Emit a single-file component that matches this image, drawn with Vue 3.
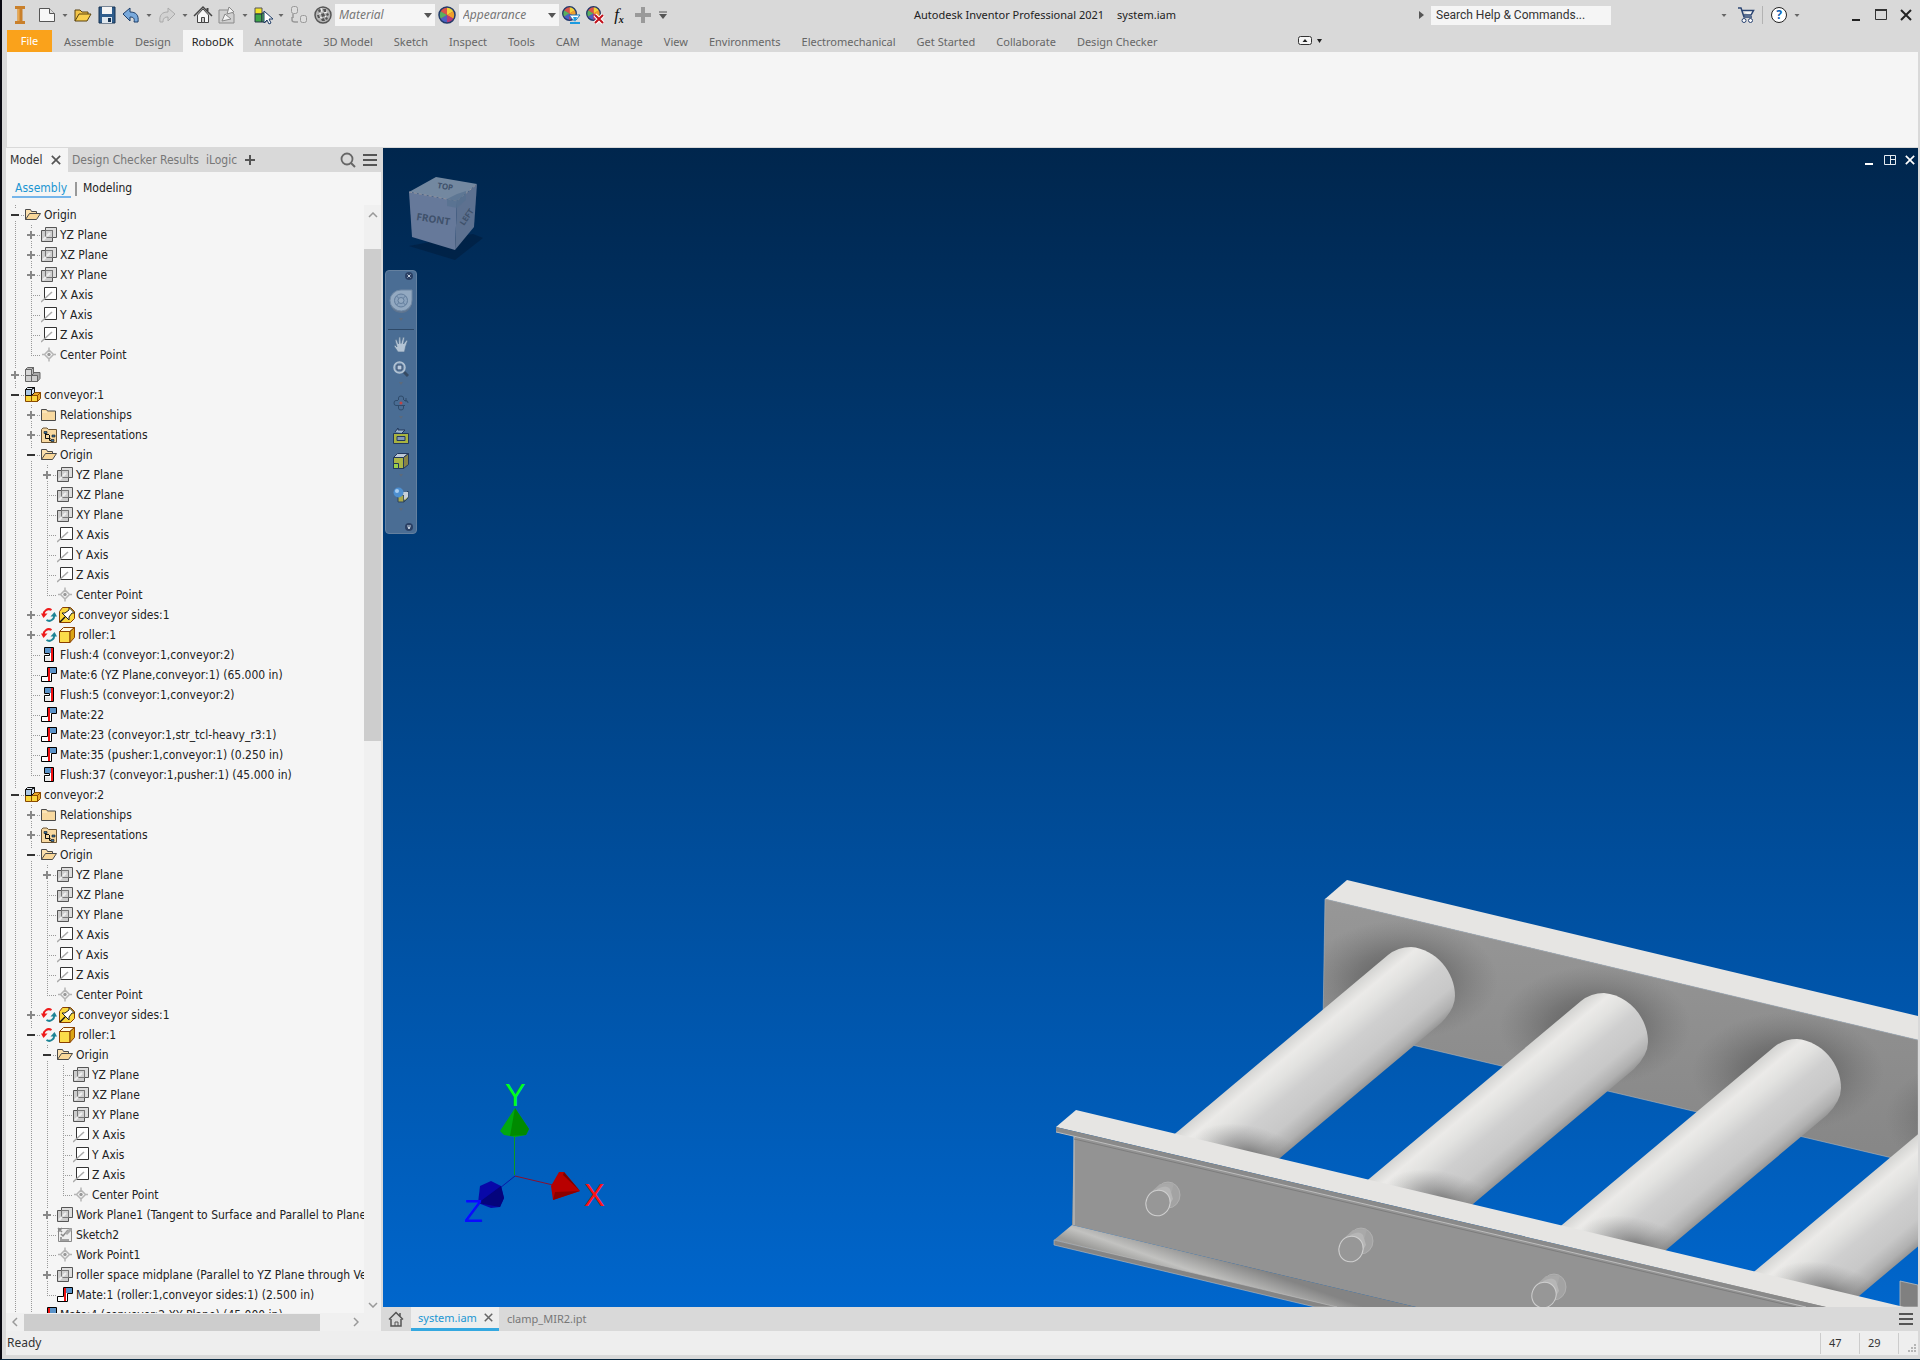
<script setup>
import { computed } from 'vue'

const quickTools = [
  { icon: 'logo', label: 'Inventor' },
  { icon: 'new', label: 'New', menu: true, gap: true },
  { icon: 'open', label: 'Open' },
  { icon: 'save', label: 'Save' },
  { icon: 'undo', label: 'Undo', menu: true },
  { icon: 'redo', label: 'Redo', menu: true },
  { icon: 'home', label: 'Home' },
  { icon: 'update', label: 'Update', menu: true },
  { icon: 'select', label: 'Select', menu: true },
  { icon: 'link', label: 'Link' },
  { icon: 'sphere', label: 'Material browser' },
]
const lookTools = [
  { icon: 'adjust', label: 'Adjust' },
  { icon: 'clear', label: 'Clear' },
  { icon: 'fx', label: 'Parameters' },
  { icon: 'add', label: 'Add' },
]
const ribbonTabs = [
  'Assemble', 'Design', 'RoboDK', 'Annotate', '3D Model', 'Sketch', 'Inspect', 'Tools', 'CAM',
  'Manage', 'View', 'Environments', 'Electromechanical', 'Get Started', 'Collaborate', 'Design Checker',
]
const activeTab = 'RoboDK'

const planes = (first) => [
  { t: 'YZ Plane', icon: 'plane', x: first },
  { t: 'XZ Plane', icon: 'plane', x: first },
  { t: 'XY Plane', icon: 'plane', x: first },
  { t: 'X Axis', icon: 'axis' },
  { t: 'Y Axis', icon: 'axis' },
  { t: 'Z Axis', icon: 'axis' },
  { t: 'Center Point', icon: 'point' },
]
const subPlanes = () => planes('').map((p, i) => (i ? p : { ...p, x: '+' }))
const common = () => [
  { t: 'Relationships', icon: 'folder', x: '+' },
  { t: 'Representations', icon: 'views', x: '+' },
  { t: 'Origin', icon: 'folder-open', x: '-', kids: subPlanes() },
  { t: 'conveyor sides:1', icon: 'pinned', x: '+', sync: true },
]
const tree = [
  { t: 'Origin', icon: 'folder-open', x: '-', kids: planes('+') },
  { t: '', icon: 'assembly-off', x: '+' },
  {
    t: 'conveyor:1', icon: 'assembly', x: '-',
    kids: [
      ...common(),
      { t: 'roller:1', icon: 'part', x: '+', sync: true },
      { t: 'Flush:4 (conveyor:1,conveyor:2)', icon: 'flush' },
      { t: 'Mate:6 (YZ Plane,conveyor:1) (65.000 in)', icon: 'mate' },
      { t: 'Flush:5 (conveyor:1,conveyor:2)', icon: 'flush' },
      { t: 'Mate:22', icon: 'mate' },
      { t: 'Mate:23 (conveyor:1,str_tcl-heavy_r3:1)', icon: 'mate' },
      { t: 'Mate:35 (pusher:1,conveyor:1) (0.250 in)', icon: 'mate' },
      { t: 'Flush:37 (conveyor:1,pusher:1) (45.000 in)', icon: 'flush' },
    ],
  },
  {
    t: 'conveyor:2', icon: 'assembly', x: '-', more: true,
    kids: [
      ...common(),
      {
        t: 'roller:1', icon: 'part', x: '-', sync: true,
        kids: [
          { t: 'Origin', icon: 'folder-open', x: '-', kids: planes('') },
          { t: 'Work Plane1 (Tangent to Surface and Parallel to Plane)', icon: 'plane', x: '+' },
          { t: 'Sketch2', icon: 'sketch' },
          { t: 'Work Point1', icon: 'point' },
          { t: 'roller space midplane (Parallel to YZ Plane through Vertex)', icon: 'plane', x: '+' },
          { t: 'Mate:1 (roller:1,conveyor sides:1) (2.500 in)', icon: 'mate' },
        ],
      },
      { t: 'Mate:4 (conveyor:2,XY Plane) (45.000 in)', icon: 'mate', more: true },
    ],
  },
]

function flatten(nodes, guides = []) {
  return nodes.flatMap((n, i) => {
    const goesOn = i < nodes.length - 1 || !!n.more
    return [{ ...n, guides, goesOn }, ...(n.kids ? flatten(n.kids, [...guides, goesOn]) : [])]
  })
}
const rows = computed(() => flatten(tree))

const navTools = [
  { icon: 'n-wheel', label: 'Navigation wheel', menu: true, big: true },
  { icon: 'n-pan', label: 'Pan' },
  { icon: 'n-zoom', label: 'Zoom', menu: true },
  { icon: 'n-orbit', label: 'Orbit', menu: true },
  { icon: 'n-look', label: 'Look at' },
  { icon: 'n-cube', label: 'View face', menu: true },
  { icon: 'n-style', label: 'Visual style', menu: true },
]
const rollers = [0, 1, 2, 3]
</script>

<template>
  <div class="app">
    <svg class="defs" aria-hidden="true">
      <symbol id="logo" viewBox="0 0 20 20"><path d="M5 1h10v3h-2.500v12H15v3H5v-3h2.500V4H5z" fill="#c9802b" /><path d="M7.500 4h2v12h-2z" fill="#e8a850" /></symbol>
      <symbol id="new" viewBox="0 0 20 20"><path d="M2.500 3.500h10l5 5v8h-15z" fill="#f7f7f7" stroke="#555" /><path d="M12.500 3.500v5h5" fill="#ddd" stroke="#555" /></symbol>
      <symbol id="open" viewBox="0 0 20 20"><path d="M2 16V5h5l2 2h6v3" fill="#f3c54a" stroke="#5a4310" /><path d="M2 16l4-7h12l-4 7z" fill="#f9cf4e" stroke="#5a4310" /></symbol>
      <symbol id="save" viewBox="0 0 20 20"><path d="M2 2h16v16H2z" fill="#2f5d8c" stroke="#173353" /><path d="M5 2h10v7H5z" fill="#f4f4f4" /><path d="M5 12h10v6H5z" fill="#dfe7ee" /><path d="M11 13h3v4h-3z" fill="#173353" /></symbol>
      <symbol id="undo" viewBox="0 0 20 20"><path d="M2 9l7-6v4c6 0 9 3 8 10h-4c1-4-1-5-4-5v4z" fill="#79a9db" stroke="#1d3f6b" /></symbol>
      <symbol id="redo" viewBox="0 0 20 20"><path d="M18 9l-7-6v4C5 7 2 10 3 17h3c0-4 2-5 5-5v4z" fill="#d2d2d2" stroke="#aaa" /></symbol>
      <symbol id="home" viewBox="0 0 20 20"><path d="M4.500 10v7.500h11V10L10 4z" fill="#f7f7f7" stroke="#444" /><path d="M1 11l9-9 9 9" fill="none" stroke="#444" stroke-width="1.500" /><path d="M8.500 12.500h3v5h-3z" fill="#ccc" stroke="#444" /><path d="M14.500 3v3" stroke="#444" stroke-width="2" /></symbol>
      <symbol id="update" viewBox="0 0 20 20"><path d="M2 5h10l5 4v9H2z" fill="#d0d0d0" stroke="#8b8b8b" /><path d="M12 2l5 5-7 2zM5 16l3-7 6 5z" fill="#f3f3f3" stroke="#888" /></symbol>
      <symbol id="select" viewBox="0 0 20 20"><path d="M2 3h7v6H2z" fill="#f3e32a" stroke="#555" /><path d="M2 9h7v8H2z" fill="#3fa648" stroke="#234" /><path d="M9 8h4v9H9z" fill="#5cc064" stroke="#234" /><path d="M11 6v12l3-3 2 4 2-1-2-4h4z" fill="#fff" stroke="#1e3c66" /></symbol>
      <symbol id="link" viewBox="0 0 20 20"><rect x="2.500" y="1.500" width="6" height="7" rx="2" fill="#ddd" stroke="#999" /><rect x="11.500" y="10.500" width="6" height="7" rx="2" fill="#ddd" stroke="#999" /><path d="M3 12v3q0 2 3 2h3M4 9v4" fill="none" stroke="#999" stroke-width="1.500" /></symbol>
      <symbol id="sphere" viewBox="0 0 20 20"><circle cx="10" cy="10" r="8" fill="#b5b5b5" stroke="#555" stroke-width="1.500" /><path d="M5 5l2-1 1 2-2 2zM10 4l3 0 0 3-2 0zM14 8l2 1-1 2-2-1zM8 9l3-1 1 3-3 1zM4 10l2 0 1 3-2 0zM8 14l3-1 1 3-3 0zM13 12l2 1-1 2-2-1z" fill="#555" /><path d="M8 3l1 4M6 8l2 1M11 8l3-1M12 11l1 1M7 12l2 1" stroke="#f5f5f5" /></symbol>
      <symbol id="wheel" viewBox="0 0 20 20"><circle cx="10" cy="10" r="8" fill="#d63a3a" /><path d="M10 10V2a8 8 0 0 1 7 4z" fill="#f0d23a" /><path d="M10 10l7-4a8 8 0 0 1 0 8z" fill="#f0a02d" /><path d="M10 10V2a8 8 0 0 0-7 4z" fill="#d9534a" /><path d="M10 10L3 6a8 8 0 0 0 0 8z" fill="#57b060" /><path d="M10 10l-7 4a8 8 0 0 0 7 4z" fill="#4a62c4" /><path d="M10 10v8a8 8 0 0 0 7-4z" fill="#b53b7a" /><circle cx="10" cy="10" r="8" fill="none" stroke="#223a6b" stroke-width="1.500" /></symbol>
      <symbol id="adjust" viewBox="0 0 20 20"><use href="#wheel" width="17" height="17" /><path d="M8 10h11l-4 5-3 0z" fill="#fff" stroke="#1377bd" /><path d="M9 17h10v2H9z" fill="#1b9be0" /><path d="M12 12h4l-2 5z" fill="#1b9be0" /></symbol>
      <symbol id="clear" viewBox="0 0 20 20"><use href="#wheel" width="17" height="17" /><path d="M10 10l8 8M18 10l-8 8" stroke="#fff" stroke-width="4" /><path d="M10 10l8 8M18 10l-8 8" stroke="#c1121c" stroke-width="2" /></symbol>
      <symbol id="add" viewBox="0 0 20 20"><path d="M8 2h4v6h6v4h-6v6H8v-6H2V8h6z" fill="#9a9a9a" /></symbol>
      <symbol id="caret" viewBox="0 0 8 8"><path d="M1.500 3h5L4 6z" fill="#666" /></symbol>
      <symbol id="cross" viewBox="0 0 12 12"><path d="M1 1l10 10M11 1L1 11" stroke="currentColor" stroke-width="2" fill="none" /></symbol>
      <symbol id="lines" viewBox="0 0 14 12"><path d="M0 1h14M0 6h14M0 11h14" stroke="#555" stroke-width="2" /></symbol>

      <symbol id="folder-open" viewBox="0 0 16 16"><path d="M.5 12.500V2.500h5l1 2h5v3" fill="#fbe0ae" stroke="#4a4a4a" /><path d="M.5 12.500l4-6h11l-4 6z" fill="#f8d79a" stroke="#4a4a4a" /></symbol>
      <symbol id="folder" viewBox="0 0 16 16"><path d="M.5 13.500V2.500h5l1 1.500h8v9.500z" fill="#f8d9a0" stroke="#4a4a4a" /><path d="M1 5h5" stroke="#fdf0d2" /></symbol>
      <symbol id="views" viewBox="0 0 16 16"><path d="M.5 15.500V2.500L2 1h4l1.500 1.500h8v13z" fill="#f8d9a0" stroke="#6b5535" /><path d="M4.500 6v5.500h5M5 7.500h3M8.500 8v5.500h2" fill="none" stroke="#111" /><path d="M3 4.500h3v2H3zM11 8h3v2h-3zM10 12.500h3v2h-3z" fill="#3b78a8" stroke="#111" stroke-width=".6" /></symbol>
      <symbol id="plane" viewBox="0 0 16 16"><path d="M4.500.5h11v10h-11z" fill="#dedede" stroke="#555" /><path d="M.5 3.500h11v11H.5z" fill="#c6c6c6" fill-opacity=".85" stroke="#555" /><path d="M4.500 3.500h7v7h-7z" fill="#d0d0d0" stroke="#777" /><path d="M2 13l3-3M6 9l3-3" stroke="#eee" stroke-width="2" /></symbol>
      <symbol id="axis" viewBox="0 0 16 16"><path d="M3.500.5h12v12h-12z" fill="#fff" stroke="#333" /><path d="M0 15L11 5" stroke="#aaa" stroke-width="1.500" /></symbol>
      <symbol id="point" viewBox="0 0 16 16"><path d="M8 3l4.500 4.500L8 12 3.500 7.500zM8 .5V3M8 12v2.500M1 7.500h2.500M12.500 7.500H15" fill="#f5f5f5" stroke="#b5b5b5" stroke-width="1.500" /><circle cx="8" cy="7.500" r="1.700" fill="#999" /></symbol>
      <symbol id="assembly" viewBox="0 0 16 16"><path d="M.5 8.500h6v6h-6zM6.500 8.500h6v6h-6z" fill="#f9d63c" stroke="#8a4a00" /><path d="M6.500 8.500l2.500-3h6.500l-3 3zM12.500 8.500l3-3v6l-3 3z" fill="#e9a82a" stroke="#8a4a00" /><path d="M.5 2.500h6v6h-6z" fill="#a9c6e4" stroke="#111" /><path d="M.5 2.500l2-2h7l-3 2zM6.500 2.500l3-2v5l-3 3z" fill="#dce8f5" stroke="#111" /></symbol>
      <symbol id="assembly-off" viewBox="0 0 16 16"><path d="M.5 8.500h6v6h-6zM6.500 8.500h6v6h-6z" fill="#cfcfcf" stroke="#666" /><path d="M6.500 8.500l2.500-3h6v6l-2.500 3v-6z" fill="#aaa" stroke="#666" /><path d="M.5 2.500h6v6h-6z" fill="#d8d8d8" stroke="#666" /><path d="M.5 2.500l2-2h6l-2 2zM6.500 2.500l2-2v6l-2 2z" fill="#bbb" stroke="#666" /></symbol>
      <symbol id="sync" viewBox="0 0 16 16"><path d="M3 8.500A5 5 0 0 1 10.500 3" fill="none" stroke="#ee1c1c" stroke-width="2" /><path d="M0 6.500h6.500L2.500 11z" fill="#ee1c1c" /><path d="M13 7.500A5 5 0 0 1 5.500 13" fill="none" stroke="#1d8496" stroke-width="2" /><path d="M9.500 9.500H16L13.500 5z" fill="#1d8496" /></symbol>
      <symbol id="part" viewBox="0 0 16 16"><path d="M.5 4.500h10.500v11H.5z" fill="#fbdc4a" stroke="#8a4000" /><path d="M.5 4.500l4-4h11l-4.500 4z" fill="#fffbe0" stroke="#8a4000" /><path d="M11 4.500l4.500-4v10l-4.500 5z" fill="#dba414" stroke="#8a4000" /></symbol>
      <symbol id="pinned" viewBox="0 0 16 16"><path d="M.5 4.500l3-4h8l4 4v7l-4 4H.5z" fill="#fbd93c" stroke="#8a4000" /><path d="M1 15l5-5" stroke="#111" stroke-width="1.500" /><path d="M3 6l3 0 4-3 0-2.500L15.500 6H13l-3 4v3z" fill="#fff" stroke="#222" /></symbol>
      <symbol id="flush" viewBox="0 0 16 16"><path d="M3.500.500h9v14h-9v-6h5v-2h-5z" fill="#fff" stroke="#000" /><path d="M4 1h6v5H4z" fill="#5a93c9" /><path d="M4 10h5v4H4z" fill="#e8e8e8" /><path d="M10 1h2v13h-2z" fill="#f01010" /></symbol>
      <symbol id="mate" viewBox="0 0 16 16"><path d="M6.500.500h9v6h-5v8H.500v-5h6z" fill="#fff" stroke="#000" /><path d="M9 1h6v5H9z" fill="#5a93c9" /><path d="M7 1h2v13H7z" fill="#f01010" /></symbol>
      <symbol id="sketch" viewBox="0 0 16 16"><path d="M1.500 1.500h13v13h-13z" fill="#eee" stroke="#888" /><path d="M1 1l4 4M1 5l4-4M4 7l2 2 5-6M5 13h7M4 10v4" fill="none" stroke="#888" stroke-width="1.500" /><path d="M9 7l5-5" stroke="#aaa" stroke-width="3" /></symbol>

      <symbol id="n-wheel" viewBox="0 0 24 24"><path d="M12 2h11v10a11 11 0 1 1-11-10z" fill="#5f7590" /><path d="M12 1h11v10a11 10.500 0 1 1-11-10z" fill="#93a9c1" stroke="#6f88a4" /><circle cx="12" cy="11.500" r="6.500" fill="#8aa2bd" stroke="#627d9c" /><path d="M7.500 7l9 9M16.500 7l-9 9" stroke="#627d9c" /><circle cx="12" cy="11.500" r="3" fill="#93a9c1" stroke="#627d9c" /></symbol>
      <symbol id="n-pan" viewBox="0 0 16 16"><path d="M5 16l-4-6 1-1 2 2-2-7 1.500-.5L5.500 8 6 1h1.500L8 7.500 10 1l1.500.5L10.500 8 13.500 4l1 1-2 6-1 5z" fill="#b4c4d4" stroke="#52708f" stroke-width=".7" /></symbol>
      <symbol id="n-zoom" viewBox="0 0 16 16"><path d="M11 11l4 4" stroke="#374b63" stroke-width="3" /><circle cx="6.500" cy="6.500" r="5.500" fill="#7390b0" stroke="#b3c3d3" stroke-width="1.500" /><path d="M4 4h5v5H4z" fill="#b9cade" stroke="#2d4566" /></symbol>
      <symbol id="n-orbit" viewBox="0 0 16 16"><path d="M5.500 5V3q0-2 2.500-2t2.500 2v2M5.500 11v2q0 2 2.500 2t2.500-2v-2M5 5.500H3q-2 0-2 2.500t2 2.500h9M11 5.500h2q2 0 2 2.500M13 3v4" fill="none" stroke="#2f4b6b" /><circle cx="8" cy="8" r="1.500" fill="#c04545" /></symbol>
      <symbol id="n-look" viewBox="0 0 16 16"><path d="M.5 5.500h15v10H.5z" fill="#a8b340" stroke="#23385c" /><path d="M4 8.500h8v4H4z" fill="#8298b5" stroke="#23385c" /><path d="M2 4l3-4v2h7L9 5" fill="#9db4cd" stroke="#23385c" /></symbol>
      <symbol id="n-cube" viewBox="0 0 16 16"><path d="M.5 4.500h10v11H.5z" fill="#aab545" stroke="#23385c" /><path d="M.5 4.500l4-4h11l-5 4z" fill="#bcc8d5" stroke="#23385c" /><path d="M10.500 4.500l5-4v11l-5 4z" fill="#8a8445" stroke="#23385c" /><path d="M.5 10.500h5v5h-5z" fill="#9bd04a" stroke="#23385c" /></symbol>
      <symbol id="n-style" viewBox="0 0 16 16"><path d="M5 8h6v7H5zM11 8l4-4v7l-4 4z" fill="#a9a94a" stroke="#2d4560" /><path d="M9 5h6v5l-4 3V8H9z" fill="#c7d0d9" /><circle cx="5.500" cy="5.500" r="5" fill="#4d8fd0" /><circle cx="4" cy="4" r="2" fill="#a7cdf0" /></symbol>
    </svg>

    <header class="topbar">
      <div class="quick">
        <template v-for="q in quickTools" :key="q.icon">
          <button class="tool" :class="{ gap: q.gap }" :aria-label="q.label"><svg width="20" height="20"><use :href="'#' + q.icon" /></svg></button>
          <button v-if="q.menu" class="drop" :aria-label="q.label + ' options'"><svg width="8" height="8"><use href="#caret" /></svg></button>
        </template>
        <span class="combo"><select aria-label="Material"><option>Material</option></select></span>
        <button class="tool" aria-label="Appearance browser"><svg width="20" height="20"><use href="#wheel" /></svg></button>
        <span class="combo"><select aria-label="Appearance"><option>Appearance</option></select></span>
        <button v-for="l in lookTools" :key="l.icon" class="tool" :aria-label="l.label">
          <span v-if="l.icon === 'fx'" class="fx">f<sub>x</sub></span>
          <svg v-else width="20" height="20"><use :href="'#' + l.icon" /></svg>
        </button>
        <button class="drop wide" aria-label="Customize"><svg width="8" height="8" viewBox="0 0 8 8"><path d="M0 1h8" stroke="#555" /><path d="M0 3h8L4 8z" fill="#555" /></svg></button>
      </div>
      <h1 class="title"><span>Autodesk Inventor Professional 2021</span><span>system.iam</span></h1>
      <div class="help">
        <svg width="5" height="8" viewBox="0 0 5 8"><path d="M0 0l5 4-5 4z" fill="#555" /></svg>
        <input type="text" aria-label="Search" placeholder="Search Help &amp; Commands..." />
        <button class="drop sign" aria-label="Sign in"><svg width="8" height="8"><use href="#caret" /></svg></button>
        <button class="tool" aria-label="App store"><svg width="18" height="18" viewBox="0 0 18 18"><path d="M1 2h3l3 9h8M4.500 4.500h12L14 9H6" fill="#f4f4f4" stroke="#2a4472" stroke-width="1.500" /><circle cx="7" cy="14.500" r="2" fill="#fff" stroke="#2a4472" /><circle cx="13.500" cy="14.500" r="2" fill="#fff" stroke="#2a4472" /></svg></button>
        <i class="sep"></i>
        <button class="tool" aria-label="Help"><span class="q">?</span></button>
        <button class="drop" aria-label="Help options"><svg width="8" height="8"><use href="#caret" /></svg></button>
        <div class="win">
          <button aria-label="Minimize"><svg width="12" height="12"><path d="M2 11h8" stroke="#222" stroke-width="2" /></svg></button>
          <button aria-label="Maximize"><svg width="12" height="12"><path d="M.5 1.500h11v9H.5z" fill="none" stroke="#333" /><path d="M0 1h12" stroke="#333" stroke-width="2" /></svg></button>
          <button aria-label="Close"><svg width="12" height="12"><use href="#cross" /></svg></button>
        </div>
      </div>
    </header>

    <nav class="tabs">
      <button class="file">File</button>
      <a v-for="t in ribbonTabs" :key="t" href="#" :class="{ on: t === activeTab }">{{ t }}</a>
      <button class="collapse" aria-label="Collapse ribbon">
        <svg width="24" height="10" viewBox="0 0 24 10"><rect x=".5" y=".5" width="13" height="8" rx="2" fill="#f5f5f5" stroke="#333" /><path d="M4.500 6h5L7 3zM19 3h5l-2.500 4z" fill="#222" /></svg>
      </button>
    </nav>
    <section class="ribbon" aria-label="RoboDK ribbon"></section>

    <main class="work">
      <aside class="browser">
        <div class="ptabs">
          <span class="ptab on">Model<button aria-label="Close Model"><svg width="10" height="10"><use href="#cross" /></svg></button></span>
          <a class="ptab results" href="#">Design Checker Results</a>
          <a class="ptab logic" href="#">iLogic</a>
          <button class="plus" aria-label="Add panel"><svg width="10" height="10"><path d="M5 0v10M0 5h10" stroke="#555" stroke-width="2" /></svg></button>
          <button class="find" aria-label="Find"><svg width="16" height="16" viewBox="0 0 16 16"><circle cx="7" cy="7" r="5.500" fill="none" stroke="#666" stroke-width="1.800" /><path d="M11 11l4 4" stroke="#666" stroke-width="2" /></svg></button>
          <button aria-label="Menu"><svg width="14" height="12"><use href="#lines" /></svg></button>
        </div>
        <div class="modes"><a class="on" href="#">Assembly</a><i></i><a href="#">Modeling</a></div>
        <div class="scroller">
          <ul class="tree">
            <li v-for="(r, i) in rows" :key="i">
              <span v-for="(g, k) in r.guides" :key="k" class="col" :class="{ line: g }"></span>
              <span class="col own line" :class="{ last: !r.goesOn }">
                <button v-if="r.x" class="exp" :class="{ open: r.x === '-' }" :aria-label="(r.x === '-' ? 'Collapse ' : 'Expand ') + r.t"></button>
              </span>
              <svg v-if="r.sync" class="ico" width="16" height="16"><use href="#sync" /></svg>
              <svg class="ico" :class="{ second: r.sync }" width="16" height="16"><use :href="'#' + r.icon" /></svg>
              <span class="txt">{{ r.t }}</span>
            </li>
          </ul>
          <div class="vbar">
            <svg width="10" height="6"><path d="M1 5l4-4 4 4" fill="none" stroke="#999" stroke-width="1.500" /></svg>
            <i></i>
            <svg width="10" height="6"><path d="M1 1l4 4 4-4" fill="none" stroke="#999" stroke-width="1.500" /></svg>
          </div>
        </div>
        <div class="hbar">
          <svg width="6" height="10"><path d="M5 1L1 5l4 4" fill="none" stroke="#999" stroke-width="1.500" /></svg>
          <i></i>
          <svg width="6" height="10"><path d="M1 1l4 4-4 4" fill="none" stroke="#999" stroke-width="1.500" /></svg>
        </div>
      </aside>

      <section class="stage">
        <div class="canvas">
          <svg class="scene" width="880" height="440" viewBox="1038 867 880 440">
            <defs>
              <linearGradient id="rg" gradientUnits="userSpaceOnUse" x1="1282" y1="1044" x2="1337" y2="1110">
                <stop offset="0" stop-color="#d4d4d2" /><stop offset=".15" stop-color="#ebeae8" /><stop offset=".3" stop-color="#e2e2e0" /><stop offset=".5" stop-color="#cfcfcf" /><stop offset=".75" stop-color="#c8c8c8" /><stop offset=".92" stop-color="#b0b0b0" /><stop offset="1" stop-color="#979797" />
              </linearGradient>
              <linearGradient id="face" x1="0" y1="0" x2="0" y2="1"><stop offset="0" stop-color="#979797" /><stop offset="1" stop-color="#868686" /></linearGradient>
              <linearGradient id="flange" gradientUnits="userSpaceOnUse" x1="1180" y1="1280" x2="1192" y2="1246"><stop offset="0" stop-color="#9a9a98" /><stop offset=".35" stop-color="#c2c2c0" /><stop offset="1" stop-color="#848484" /></linearGradient>
              <radialGradient id="ao"><stop offset="0" stop-color="#4a4a4a" stop-opacity=".8" /><stop offset=".5" stop-color="#555" stop-opacity=".45" /><stop offset="1" stop-color="#666" stop-opacity="0" /></radialGradient>
              <radialGradient id="root"><stop offset="0" stop-color="#555" stop-opacity=".7" /><stop offset="1" stop-color="#888" stop-opacity="0" /></radialGradient>
              <clipPath id="plate"><path d="M1325 899L1918 1040V1164L1323 1024z" /></clipPath>
              <clipPath id="tube"><path id="tubeshape" d="M1164 1143L1388 955Q1398 947 1411 947C1436 949 1455 972 1455 996Q1455 1009 1441 1023L1268 1168z" /></clipPath>
            </defs>
            <path d="M1347 880L1918 1016V1040L1325 899z" fill="#e6e5e3" />
            <path d="M1325 899L1918 1040V1164L1323 1024z" fill="url(#face)" stroke="#b9b9b9" stroke-width=".6" />
            <g clip-path="url(#plate)">
              <ellipse v-for="r in rollers" :key="r" :transform="`translate(${193 * r} ${46 * r})`" cx="1402" cy="980" rx="96" ry="60" fill="url(#ao)" />
            </g>
            <g v-for="r in rollers" :key="r" :transform="`translate(${193 * r} ${46 * r})`">
              <use href="#tubeshape" fill="url(#rg)" />
              <g clip-path="url(#tube)">
                <ellipse cx="1250" cy="1154" rx="58" ry="28" transform="rotate(14 1250 1154)" fill="url(#root)" />
              </g>
            </g>
            <path d="M1900 1281l18 4v22h-18z" fill="#808080" stroke="#bdbdbd" stroke-width=".8" />
            <path d="M1074 1134L1830 1307H1416L1072 1225z" fill="#939393" />
            <path d="M1074 1134v91" stroke="#c6c6c6" />
            <path d="M1072 1225L1416 1307H1326L1054 1240z" fill="url(#flange)" />
            <path d="M1054 1240L1337 1307H1315L1054 1245z" fill="#858585" stroke="#c0c0c0" stroke-width=".6" />
            <path d="M1076 1110L1904 1307H1826L1056 1127z" fill="#e6e5e3" />
            <path d="M1056 1127L1826 1307H1806L1056 1132z" fill="#8a8a8a" />
            <path d="M1056 1132L1806 1307" stroke="#bdbdbd" fill="none" />
            <path d="M1074 1139L1796 1307" stroke="#7d7d7d" fill="none" />
            <g v-for="r in [0, 1, 2]" :key="r" :transform="`translate(${193 * r} ${46 * r})`">
              <ellipse cx="1168" cy="1195" rx="12" ry="13" fill="#a3a3a3" stroke="#b5b5b5" stroke-width=".8" />
              <path d="M1150 1193l10-9 14-1-7 27-4 3z" fill="#a9a9a9" />
              <path d="M1157 1189q10-5 13 0l3 10-6 10z" fill="#b6b6b6" />
              <ellipse cx="1158" cy="1203" rx="12" ry="13" transform="rotate(25 1158 1203)" fill="#979797" stroke="#cfcfcf" />
            </g>
          </svg>

          <svg class="viewcube" width="90" height="90" viewBox="0 0 90 90">
            <path d="M9 76l46 14 28-22-10-4z" fill="#001a38" opacity=".5" />
            <path d="M36 7l41 7-20 17-48-9z" fill="#7388a0" />
            <path d="M9 22l48 9-2 49-43-13z" fill="#66799a" />
            <path d="M57 31l20-17-3 43-19 23z" fill="#5d7190" />
            <path d="M9 22l48 9 20-17" fill="none" stroke="#93949f" stroke-dasharray="3 2" />
            <path d="M47 29l10-5 9-3v9l-9 8-10-2z" fill="#56708f" opacity=".7" />
            <text x="16" y="50" transform="rotate(9 16 50)" font-size="10">FRONT</text>
            <text x="37" y="18" transform="rotate(10 37 18)" font-size="8">TOP</text>
            <text x="64" y="56" transform="rotate(-56 64 56)" font-size="8">LEFT</text>
          </svg>

          <div class="navbar" role="toolbar" aria-label="Navigation">
            <button class="dot" aria-label="Close navigation bar"><svg width="8" height="8" viewBox="0 0 8 8"><circle cx="4" cy="4" r="4" fill="#2a4065" /><path d="M2.500 2.500l3 3M5.500 2.500l-3 3" stroke="#c5d0dd" /></svg></button>
            <button v-for="n in navTools" :key="n.icon" class="nav" :class="{ menu: n.menu, big: n.big }" :aria-label="n.label">
              <svg :width="n.big ? 24 : 16" :height="n.big ? 24 : 16"><use :href="'#' + n.icon" /></svg>
              <svg v-if="n.menu" class="mini" width="6" height="4"><path d="M1 0h4L3 3z" fill="#5c6a7c" /></svg>
            </button>
            <button class="dot end" aria-label="Navigation bar options"><svg width="8" height="8" viewBox="0 0 8 8"><circle cx="4" cy="4" r="4" fill="#2a4065" /><path d="M2 3h4M3 4.500h2L4 6z" stroke="#c5d0dd" fill="#c5d0dd" /></svg></button>
          </div>

          <svg class="triad" width="180" height="160" viewBox="0 0 180 160">
            <path d="M75 106L60 118" stroke="#0a1aa8" /><path d="M74.500 105V66" stroke="#0a9a20" /><path d="M75 106l38 9" stroke="#8a1030" />
            <path d="M75 38l14 21-3 6-11 2-11-2-4-4z" fill="#00a810" /><path d="M75 38l14 21-3 6-16 1z" fill="#008a00" />
            <path d="M140 121l-27 9-2-14 8-14h5z" fill="#b80000" /><path d="M140 121l-27 9 2-8z" fill="#8c0000" /><path d="M124 102l16 19-17-16z" fill="#7c0000" />
            <path d="M38 133l2-17 11-5 10 5 3 12-4 9-9 1z" fill="#0808a8" /><path d="M38 133l23-17 3 12-4 9z" fill="#04047c" />
            <text x="65" y="36" fill="#00ff20">Y</text><text x="144" y="136" fill="#ff1414">X</text><text x="24" y="152" fill="#0a0aff">Z</text>
          </svg>

          <div class="mdi">
            <button aria-label="Minimize view"><svg width="12" height="12"><path d="M2 10h8" stroke="#fff" stroke-width="2" /></svg></button>
            <button aria-label="Restore view"><svg width="12" height="12"><path d="M.5 1.500h11v9H.5zM6.500 1v9M6.500 5.500h5" fill="none" stroke="#e4eaf0" /></svg></button>
            <button aria-label="Close view"><svg width="10" height="10"><use href="#cross" /></svg></button>
          </div>
        </div>
        <div class="docs">
          <button class="dhome" aria-label="Home view"><svg width="16" height="16" viewBox="0 0 16 16"><path d="M3 8v7h10V8M1 8.500l7-7 7 7M12 2v3" fill="none" stroke="#555" stroke-width="1.500" /><path d="M7 15v-4h3v4" fill="none" stroke="#555" /></svg></button>
          <span class="doc on">system.iam<button aria-label="Close system.iam"><svg width="9" height="9"><use href="#cross" /></svg></button></span>
          <a class="doc" href="#">clamp_MIR2.ipt</a>
          <button class="dmenu" aria-label="Document list"><svg width="14" height="12"><use href="#lines" /></svg></button>
        </div>
      </section>
    </main>

    <footer class="status">
      <span class="ready">Ready</span><span class="num">47</span><span class="num">29</span>
      <span class="grip"><svg width="8" height="8"><path d="M6 0h2v2H6zM3 3h2v2H3zM6 3h2v2H6zM0 6h2v2H0zM3 6h2v2H3zM6 6h2v2H6z" fill="#b5b5b5" /></svg></span>
    </footer>
  </div>
</template>

<style>
body { margin: 0; background: #d9d9d9; }
</style>
<style scoped>
* { box-sizing: border-box; }
button { border: 0; padding: 0; background: none; font: inherit; color: inherit; display: flex; align-items: center; justify-content: center; }
a { color: inherit; text-decoration: none; }
svg { display: block; flex: none; }
.defs { position: absolute; width: 0; height: 0; }
.app {
  display: flex; flex-direction: column; height: 100vh; overflow: hidden;
  background: #d9d9d9; border-left: 2px solid #0a0a12; border-bottom: 1px solid #06263f;
  font: 11px/16px "Noto Sans", sans-serif; color: #333;
}
.topbar { display: flex; align-items: center; height: 30px; padding-left: 6px; flex: none; }
.quick, .help, .win { display: flex; align-items: center; }
.tool { width: 24px; height: 24px; flex: none; }
.tool.gap { margin-left: 3px; }
.drop { width: 12px; height: 24px; flex: none; }
.drop.wide { width: 16px; }
.combo { position: relative; width: 100px; height: 22px; }
.combo select { appearance: none; border: 0; border-radius: 0; width: 100%; height: 22px; padding: 0 4px; background: #f5f5f5; color: #777; font: italic 12px/22px "Noto Sans", sans-serif; }
.combo::after { content: ""; position: absolute; right: 3px; top: 9px; border: 4px solid transparent; border-top: 5px solid #555; border-bottom: 0; }
.fx { font: italic 17px/20px "Liberation Serif", serif; color: #111; }
.fx sub { font-size: 10px; font-weight: bold; vertical-align: -3px; line-height: 10px; }
.title { flex: 1; margin: 0; font: inherit; display: flex; justify-content: center; gap: 13px; color: #222; }
.help input { width: 180px; height: 19px; margin-left: 7px; border: 0; padding: 0 5px; background: #f5f5f5; font: 12px/19px Roboto, sans-serif; }
.help input::placeholder { color: #333; opacity: 1; }
.sign { margin-left: 107px; margin-right: 4px; }
.sep { width: 1px; height: 18px; margin: 0 4px; background: #b3b3b3; }
.q { width: 16px; height: 16px; border: 1px solid #222; border-radius: 50%; background: #fff; color: #0a62b5; font: bold 12px/14px "Noto Sans", sans-serif; text-align: center; }
.win { gap: 13px; margin: 0 8px 0 47px; color: #222; }
.tabs { display: flex; align-items: stretch; height: 22px; flex: none; padding-left: 5px; gap: 3px; color: #666; }
.tabs a { padding: 0 9px; line-height: 23px; }
.tabs a.on { background: #f5f5f5; color: #222; }
.file { width: 45px; background: #faa21b; color: #fff; }
.collapse { margin-left: 128px; }
.ribbon { height: 95px; flex: none; margin: 0 2px 0 5px; background: #f5f5f5; }
.work { flex: 1; min-height: 0; display: flex; padding: 1px 2px 0 4px; }
.browser { width: 375px; flex: none; display: flex; flex-direction: column; background: #f5f5f5; font: 12px/16px "DejaVu Sans Condensed", "DejaVu Sans", sans-serif; }
.ptabs { display: flex; align-items: stretch; height: 24px; flex: none; background: #d9d9d9; color: #777; padding-right: 4px; }
.ptab { display: flex; align-items: center; gap: 9px; padding: 0 4px; }
.ptab.on { background: #f5f5f5; color: #333; width: 62px; }
.ptab button { color: #555; }
.ptab.logic { padding-left: 3px; }
.plus { margin-left: 4px; }
.find { margin: 0 7px 0 auto; }
.modes { display: flex; align-items: center; height: 33px; flex: none; padding-left: 6px; color: #222; }
.modes a { padding: 0 4px 0 3px; height: 18px; border-bottom: 2px solid transparent; }
.modes .on { color: #1c96d2; border-color: #76b5ea; }
.modes i { width: 2px; height: 14px; margin: 0 3px 0 4px; background: #999; }
.scroller { flex: 1; min-height: 0; display: flex; }
.tree { flex: 1; min-width: 0; overflow: hidden; list-style: none; margin: 0; padding: 0 0 0 1px; color: #222; }
.tree li { display: flex; align-items: center; height: 20px; white-space: nowrap; }
.col { width: 16px; height: 20px; flex: none; position: relative; }
.col.line { background: repeating-linear-gradient(#999 0 1px, transparent 1px 2px) 8px 0 / 1px 100% no-repeat; }
.col.last { background-size: 1px 11px; }
.own::before { content: ""; position: absolute; left: 8px; top: 10px; width: 9px; height: 1px; background: repeating-linear-gradient(90deg, #999 0 1px, transparent 1px 2px); }
.exp { position: absolute; left: 3px; top: 3px; width: 11px; height: 13px; background: linear-gradient(#888, #888) 1px 6px / 8px 2px no-repeat, linear-gradient(#888, #888) 4px 3px / 2px 8px no-repeat, #f5f5f5; }
.exp.open { background: linear-gradient(#333, #333) 1px 6px / 8px 2px no-repeat, #f5f5f5; }
.ico { margin: 0 3px 0 2px; }
.ico.second { margin-left: -1px; }
.txt { height: 16px; }
.vbar { width: 17px; flex: none; display: flex; flex-direction: column; align-items: center; justify-content: space-between; padding: 7px 0 5px; background: #f0f0f0; }
.vbar i { flex: 0 0 492px; width: 17px; margin: 31px 0 auto; background: #cdcdcd; }
.hbar { height: 18px; flex: none; display: flex; align-items: center; padding: 0 22px 0 6px; background: #f0f0f0; }
.hbar i { width: 296px; height: 17px; margin: 0 auto 0 6px; background: #cdcdcd; }
.stage { flex: 1; min-width: 0; margin-left: 2px; display: flex; flex-direction: column; }
.canvas { flex: 1; min-height: 0; position: relative; overflow: hidden; background: linear-gradient(#00264d, #0066cc); }
.scene { position: absolute; right: 0; bottom: 0; }
.viewcube { position: absolute; left: 17px; top: 22px; font-family: "Noto Sans", sans-serif; font-weight: bold; fill: #3f516b; overflow: visible; }
.navbar { position: absolute; left: 2px; top: 122px; width: 32px; height: 264px; display: flex; flex-direction: column; border: 1px solid #64809f; border-radius: 4px; background: #4a6d94; }
.dot { align-self: flex-end; width: 14px; height: 10px; flex: none; }
.dot.end { margin-top: auto; height: 12px; }
.nav { flex-direction: column; height: 24px; flex: none; }
.nav.menu { height: 34px; gap: 5px; }
.nav.big { height: 49px; border-bottom: 1px solid #2e4968; margin: 0 2px 2px; }
.triad { position: absolute; left: 57px; bottom: 77px; font: 31px "Liberation Sans", sans-serif; }
.mdi { position: absolute; right: 3px; top: 6px; display: flex; align-items: center; gap: 9px; color: #fff; }
.docs { display: flex; align-items: stretch; height: 24px; flex: none; color: #777; }
.dhome { width: 28px; padding-right: 3px; }
.doc { display: flex; align-items: center; gap: 7px; padding: 0 8px; font-size: 11px; }
.doc.on { width: 88px; padding: 0 7px; background: #eee; color: #1c96d2; border-bottom: 3px solid #34a8e0; }
.doc button { color: #666; }
.dmenu { margin: 0 5px 0 auto; }
.status { display: flex; align-items: center; height: 24px; flex: none; margin: 0 2px 4px 4px; background: #eee; font-size: 12px; }
.ready { flex: 1; padding-left: 1px; }
.num { width: 39px; height: 21px; line-height: 20px; border-left: 1px solid #ccc; padding-left: 8px; font-size: 11px; }
.grip { width: 20px; height: 21px; border-left: 1px solid #ccc; display: flex; align-items: flex-end; justify-content: flex-end; padding: 2px; }
</style>
